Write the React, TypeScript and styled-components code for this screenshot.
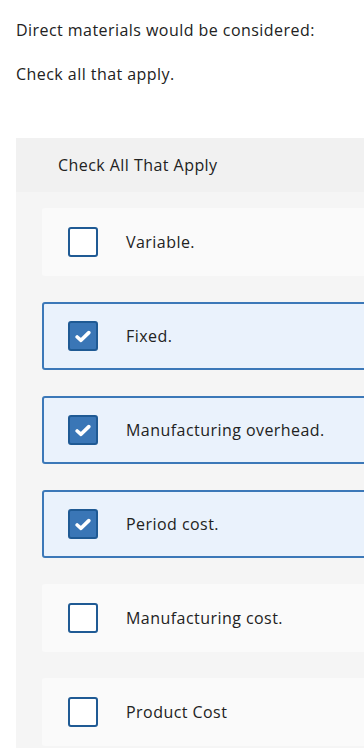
import { useState } from "react";
import styled, { createGlobalStyle } from "styled-components";

const GlobalStyle = createGlobalStyle`
  html, body {
    margin: 0;
    padding: 0;
    background: #fff;
    overflow-x: hidden;
  }
  body {
    font-family: "Open Sans", "Liberation Sans", sans-serif;
    color: #222;
    letter-spacing: 0.45px;
  }
`;

const Page = styled.div`
  width: 364px;
  overflow: hidden;
`;

const Prompt = styled.p`
  margin: 0;
  padding: 19px 16px 0;
  font-size: 16px;
  line-height: 22px;
`;

const Hint = styled.p`
  margin: 0;
  padding: 22px 16px 0;
  font-size: 16px;
  line-height: 22px;
`;

const Panel = styled.section`
  margin: 53px 0 0 16px;
  width: 400px;
  background: #f5f5f5;
  padding-bottom: 20px;
`;

const PanelHeader = styled.div`
  height: 54px;
  display: flex;
  align-items: center;
  padding-left: 42px;
  background: #f1f1f1;
  font-size: 16px;
`;

const OptionList = styled.div`
  display: flex;
  flex-direction: column;
  gap: 26px;
  padding: 16px 0 0 26px;
`;

const Option = styled.label<{ $checked: boolean }>`
  box-sizing: border-box;
  height: 68px;
  display: flex;
  align-items: center;
  gap: 28px;
  padding-left: 24px;
  border: 2px solid ${(p) => (p.$checked ? "#3c78b8" : "transparent")};
  border-radius: 3px;
  background: ${(p) => (p.$checked ? "#eaf2fc" : "#fafafa")};
  cursor: pointer;
  font-size: 16px;
`;

const Box = styled.span<{ $checked: boolean }>`
  box-sizing: border-box;
  width: 30px;
  height: 30px;
  flex: none;
  display: flex;
  align-items: center;
  justify-content: center;
  border: 2px solid #1f5a94;
  border-radius: 3px;
  background: ${(p) => (p.$checked ? "#3a76b6" : "#fff")};
`;

const options = [
  { label: "Variable.", checked: false },
  { label: "Fixed.", checked: true },
  { label: "Manufacturing overhead.", checked: true },
  { label: "Period cost.", checked: true },
  { label: "Manufacturing cost.", checked: false },
  { label: "Product Cost", checked: false },
];

const Check = () => (
  <svg width="16" height="13" viewBox="0 0 16 13">
    <path
      d="M2.2 7 L6 10.3 L13.8 2.6"
      fill="none"
      stroke="#fff"
      strokeWidth="3.6"
      strokeLinecap="round"
      strokeLinejoin="round"
    />
  </svg>
);

export default function App() {
  const [checked, setChecked] = useState(options.map((o) => o.checked));

  const toggle = (i: number) => {
    setChecked((prev) => prev.map((v, j) => (j === i ? !v : v)));
  };

  return (
    <Page>
      <GlobalStyle />
      <Prompt>Direct materials would be considered:</Prompt>
      <Hint>Check all that apply.</Hint>
      <Panel>
        <PanelHeader>Check All That Apply</PanelHeader>
        <OptionList>
          {options.map((o, i) => (
            <Option key={o.label} $checked={checked[i]} onClick={() => toggle(i)}>
              <Box $checked={checked[i]}>{checked[i] && <Check />}</Box>
              {o.label}
            </Option>
          ))}
        </OptionList>
      </Panel>
    </Page>
  );
}
